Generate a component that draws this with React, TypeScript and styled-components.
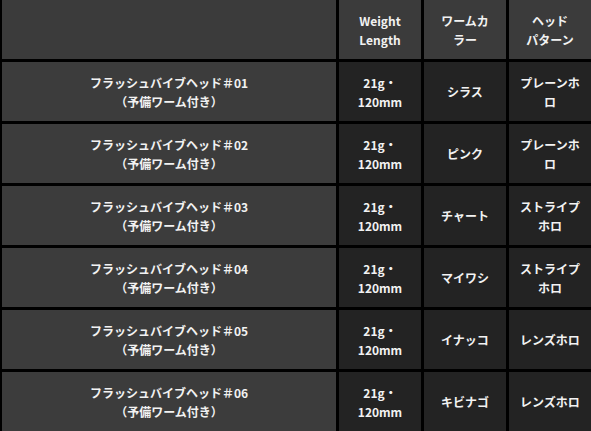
import { createGlobalStyle } from 'styled-components';
import styled from 'styled-components';

const GlobalStyle = createGlobalStyle`
  html, body {
    margin: 0;
    padding: 0;
    background: #000;
    overflow: hidden;
  }
`;

type Item = {
  no: string;
  size: string[];
  color: string[];
  pattern: string[];
};

const items: Item[] = [
  { no: '01', size: ['21g・', '120mm'], color: ['シラス'], pattern: ['プレーンホ', 'ロ'] },
  { no: '02', size: ['21g・', '120mm'], color: ['ピンク'], pattern: ['プレーンホ', 'ロ'] },
  { no: '03', size: ['21g・', '120mm'], color: ['チャート'], pattern: ['ストライプ', 'ホロ'] },
  { no: '04', size: ['21g・', '120mm'], color: ['マイワシ'], pattern: ['ストライプ', 'ホロ'] },
  { no: '05', size: ['21g・', '120mm'], color: ['イナッコ'], pattern: ['レンズホロ'] },
  { no: '06', size: ['21g・', '120mm'], color: ['キビナゴ'], pattern: ['レンズホロ'] },
];

const Lines = ({ lines }: { lines: string[] }) => (
  <>
    {lines.map((l, i) => (
      <span key={i}>
        {i > 0 && <br />}
        {l}
      </span>
    ))}
  </>
);

export default function App() {
  return (
    <>
      <GlobalStyle />
      <SpecTable>
        <colgroup>
          <col style={{ width: 334 }} />
          <col style={{ width: 82 }} />
          <col style={{ width: 82 }} />
          <col style={{ width: 82 }} />
        </colgroup>
        <thead>
          <tr>
            <HeadCell />
            <HeadCell>
              <Lines lines={['Weight', 'Length']} />
            </HeadCell>
            <HeadCell>
              <Lines lines={['ワームカ', 'ラー']} />
            </HeadCell>
            <HeadCell>
              <Lines lines={['ヘッド', 'パターン']} />
            </HeadCell>
          </tr>
        </thead>
        <tbody>
          {items.map((item) => (
            <tr key={item.no}>
              <NameCell>
                フラッシュバイブヘッド＃{item.no}
                <br />
                （予備ワーム付き）
              </NameCell>
              <DataCell>
                <Lines lines={item.size} />
              </DataCell>
              <DataCell>
                <Lines lines={item.color} />
              </DataCell>
              <DataCell>
                <Lines lines={item.pattern} />
              </DataCell>
            </tr>
          ))}
        </tbody>
      </SpecTable>
    </>
  );
}

const SpecTable = styled.table`
  table-layout: fixed;
  width: 595px;
  margin: -3px 0 0 -1px;
  border-collapse: separate;
  border-spacing: 3px;
  font-family: 'Noto Sans CJK JP', 'Noto Sans', sans-serif;
  font-size: 12px;
  font-weight: 700;
  line-height: 19px;
  color: #f2f2f2;
`;

const Cell = styled.td`
  box-sizing: border-box;
  height: 59px;
  padding: 0 8px;
  text-align: center;
  vertical-align: middle;
`;

const HeadCell = styled(Cell).attrs({ as: 'th' })`
  background: #3b3b3b;
  font-weight: 700;
`;

const NameCell = styled(Cell)`
  background: #3c3c3c;
`;

const DataCell = styled(Cell)`
  background: #232323;
`;
